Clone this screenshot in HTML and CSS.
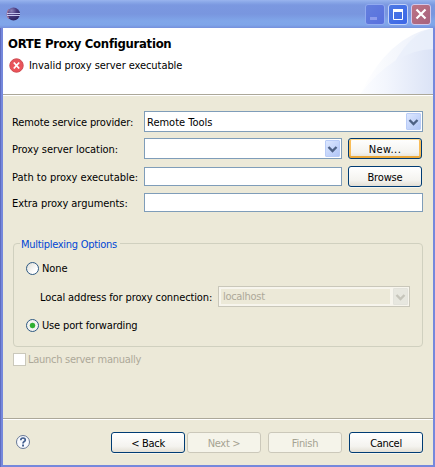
FILE: index.html
```html
<!DOCTYPE html>
<html lang="en">
<head>
<meta charset="utf-8">
<title>ORTE Proxy Configuration</title>
<link rel="stylesheet" href="styles.css">
</head>
<body>
<main class="window">
  <header class="titlebar">
    <svg class="app-icon" width="15" height="14" viewBox="0 0 15 14">
      <defs><radialGradient id="orb" cx=".35" cy=".25" r=".75"><stop offset="0" stop-color="#8d83b8"/><stop offset=".5" stop-color="#4a3b80"/><stop offset="1" stop-color="#2c2360"/></radialGradient></defs>
      <circle cx="7.5" cy="7" r="6.5" fill="url(#orb)"/>
      <path d="M3 2.5A6.3 6.3 0 0 0 3 11.5" fill="none" stroke="#9c7294" stroke-width="1.2"/>
      <path d="M1 6.5h13M1 8.5h13" stroke="#c5c5ee"/>
    </svg>
    <div class="controls">
      <span class="ctl min"><svg width="20" height="20"><path d="M5 13h7v3H5z" fill="#8c9cec"/></svg></span>
      <span class="ctl max"><svg width="20" height="20"><path d="M5.500 6v9.500h9V6" fill="none" stroke="#fff"/><path d="M5 5h10v3H5z" fill="#fff"/></svg></span>
      <span class="ctl close"><svg width="20" height="20"><path d="M5.500 5.500l9 9M14.500 5.500l-9 9" stroke="#fff" stroke-width="2.200"/></svg></span>
    </div>
  </header>
  <section class="banner">
    <svg class="swoosh" width="76" height="66" viewBox="0 0 76 66">
      <defs>
        <linearGradient id="fade1" x2="1"><stop offset="0" stop-color="#fff"/><stop offset="1" stop-color="#eaeffa"/></linearGradient>
        <linearGradient id="fade2" x2="1"><stop offset="0" stop-color="#fcfdff"/><stop offset=".35" stop-color="#f3f6fd"/><stop offset="1" stop-color="#dbe3f6"/></linearGradient>
      </defs>
      <path d="M3 66Q32 8 76 0V66Z" fill="url(#fade1)"/>
      <path d="M24 66Q44 7 76 0V66Z" fill="#e6edfa" opacity=".6"/>
      <path d="M3 66Q37 22 76 21V66Z" fill="url(#fade2)"/>
    </svg>
    <h1>ORTE Proxy Configuration</h1>
    <p class="message">
      <svg width="15" height="15" viewBox="0 0 15 15"><defs><linearGradient id="red" x2="0" y2="1"><stop offset="0" stop-color="#e5555c"/><stop offset="1" stop-color="#ee5358"/></linearGradient></defs><circle cx="7.500" cy="7.500" r="6.700" fill="url(#red)" stroke="#cf4a50"/><path d="M4.800 4.500l5.400 6M10.200 4.500l-5.400 6" stroke="#fff" stroke-width="1.800"/></svg>
      <span class="t-msg">Invalid proxy server executable</span>
    </p>
  </section>
  <section class="content">
    <div class="row r1"><label class="t-remote">Remote service provider:</label><div class="combo wide"><span class="t-tools">Remote Tools</span><i class="arrow"><svg width="15" height="17"><path d="M3.500 7L7.500 11L11.500 7" fill="none" stroke="#4d6185" stroke-width="2.400"/></svg></i></div></div>
    <div class="row r2"><label class="t-loc">Proxy server location:</label><div class="combo"><i class="arrow"><svg width="15" height="17"><path d="M3.500 7L7.500 11L11.500 7" fill="none" stroke="#4d6185" stroke-width="2.400"/></svg></i></div><button class="hot"><span class="t-new">New...</span></button></div>
    <div class="row r3"><label class="t-path">Path to proxy executable:</label><div class="field"></div><button><span class="t-browse">Browse</span></button></div>
    <div class="row r4"><label class="t-extra">Extra proxy arguments:</label><div class="field wide"></div></div>
    <div class="group">
      <div class="legend"><span class="t-multi">Multiplexing Options</span></div>
      <div class="option none"><i class="radio"></i><span class="t-none">None</span></div>
      <div class="address"><span class="t-local">Local address for proxy connection:</span><div class="combo disabled"><div class="value"><span class="t-host">localhost</span></div><i class="arrow"><svg width="15" height="17"><path d="M3.500 7L7.500 11L11.500 7" fill="none" stroke="#c6c5bb" stroke-width="2.400"/></svg></i></div></div>
      <div class="option port"><i class="radio checked"></i><span class="t-use">Use port forwarding</span></div>
    </div>
    <div class="launch"><i class="check"></i><span class="t-launch">Launch server manually</span></div>
  </section>
  <footer class="actions">
    <svg class="help" width="16" height="16" viewBox="0 0 16 16"><circle cx="8" cy="8" r="6.500" fill="#f8faff" stroke="#697997"/><path d="M5.800 6.200C5.800 3.300 10.300 3.400 10.300 5.900C10.300 7.600 8 7.400 8 9.400" fill="none" stroke="#415d8d" stroke-width="1.700"/><path d="M7.100 10.500h1.900v1.900H7.100z" fill="#415d8d"/></svg>
    <button><span class="t-back">&lt; Back</span></button>
    <button class="off"><span class="t-next">Next &gt;</span></button>
    <button class="off finish"><span class="t-finish">Finish</span></button>
    <button class="cancel"><span class="t-cancel">Cancel</span></button>
  </footer>
</main>
</body>
</html>
```
FILE: styles.css
```css
* { box-sizing: border-box; }
body { margin: 0; width: 435px; height: 467px; overflow: hidden; background: #7588dc; font: 11px/14px "DejaVu Sans Condensed", "DejaVu Sans", sans-serif; font-stretch: condensed; color: #000; }
svg { display: block; }
span { white-space: nowrap; }
.window { height: 467px; display: flex; flex-direction: column; padding: 0 2px 2px 3px; border-top-left-radius: 3px; background: linear-gradient(90deg, #5f6cc0 0 1px, #7588dc 1px); }
.titlebar { height: 28px; flex: none; margin: 0 -2px 0 -3px; padding: 4px 4px 0 6px; display: flex; justify-content: space-between; background: linear-gradient(#99b4ee 0, #8aa8e8 2px, #7b98e0 5px, #7996df 14px, #80a6e9 21px, #7fa5e9 25px, #7590dc 28px); }
.app-icon { margin-top: 3px; }
.controls { display: flex; gap: 3px; }
.ctl { width: 20px; height: 21px; border: 1px solid #c3d2f8; border-radius: 3px; overflow: hidden; }
.ctl svg { margin: -1px; }
.min { border-color: #91aaf0; background: linear-gradient(135deg, #637fde, #5870de); }
.max { background: linear-gradient(135deg, #4c79e4, #3c66e7); }
.close { background: linear-gradient(135deg, #bd7384, #a6627e); border-color: #d1c7ea; }
.banner { position: relative; height: 67px; flex: none; background: #fff; border-bottom: 1px solid #aca899; padding: 9px 0 0 5px; }
.swoosh { position: absolute; right: 0; top: 0; }
h1 { margin: 0; font-size: 13px; line-height: 14px; font-weight: bold; white-space: nowrap; letter-spacing: -.29px; }
.message { margin: 7px 0 0 1px; display: flex; gap: 5px; align-items: center; }
.content { height: 323px; flex: none; background: #ece9d8; border-top: 1px solid #fff; padding: 15px 10px 0; }
.row { display: grid; grid-template-columns: 132px 198px 74px; align-items: center; margin-left: -1px; }
.row button { margin-left: 6px; }
.row label { white-space: nowrap; }
.content label, .content span, .actions span { transform: translateY(1px); }
.t-msg { letter-spacing: -.07px; }
.t-remote { letter-spacing: -.13px; }
.t-loc, .t-extra { letter-spacing: -.05px; }
.t-multi { letter-spacing: -.29px; }
.t-none { letter-spacing: -.1px; }
.t-local { letter-spacing: -.11px; }
.t-host { letter-spacing: -.3px; }
.t-use { letter-spacing: -.15px; }
.t-launch { letter-spacing: -.28px; }
.t-new { letter-spacing: .4px; }
.t-browse { letter-spacing: -.15px; }
.t-back, .t-cancel, .t-next, .t-finish { letter-spacing: -.3px; }
.r1 { height: 21px; }
.r2 { height: 21px; margin-top: 6px; }
.r3 { height: 21px; margin-top: 7px; }
.r4 { height: 19px; margin-top: 6px; }
.combo, .field { border: 1px solid #7f9db9; background: #fff; }
.combo { height: 21px; display: flex; align-items: center; padding: 1px; }
.combo > span { margin-left: 1px; }
.field { height: 19px; }
.wide { width: 279px; }
.arrow { width: 15px; height: 17px; margin-left: auto; border-radius: 1px; border: 1px solid #b9ccf7; background: linear-gradient(135deg, #dce7ff, #b1c6f7); }
.arrow svg { margin: -1px; }
button { width: 74px; height: 21px; padding: 0; border: 1px solid #003c74; border-radius: 3px; background: linear-gradient(#fff, #f4f3ef 70%, #e3dfd5); font: inherit; color: #000; display: flex; align-items: center; justify-content: center; box-shadow: 0 1px 0 #f7f5ec; }
.hot { box-shadow: inset 0 1px #ffdc92, inset 0 -2px #eba83a, inset 2px 0 #f9bd58, inset -2px 0 #f9bd58; }
.off { color: #a5a392; background: #f5f4ea; border-color: #cbc8ba; box-shadow: none; }
.group { height: 104px; margin-top: 31px; border: 1px solid #d0d0bf; border-radius: 4px; padding-left: 12px; }
.legend { height: 14px; margin: -7px 0 0 -6px; display: flex; }
.legend span { background: #ece9d8; padding: 0 3px 0 1px; color: #0046d5; }
.option { display: flex; align-items: center; gap: 3px; height: 14px; }
.none { margin-top: 10px; }
.radio { width: 13px; height: 13px; border: 1px solid #2d5983; border-radius: 50%; background: linear-gradient(135deg, #deddd5, #fff 70%); }
.checked { background: radial-gradient(circle, #2fae31 0 2px, #46bd47 2.500px, #f3f3ef 3.200px); }
.address { height: 21px; margin-top: 11px; padding-left: 14px; display: flex; align-items: center; }
.disabled { width: 192px; margin-left: auto; margin-right: 12px; border-color: #c9c7ba; background: #f7f5ed; color: #aca899; }
.value { width: 169px; height: 15px; margin-left: 1px; padding-left: 2px; background: #ece9d8; line-height: 14px; }
.value span { display: block; }
.disabled .arrow { border-color: #e3e3dc; background: #e7e7df; }
.port { margin-top: 11px; }
.launch { height: 14px; margin-top: 5px; display: flex; align-items: center; gap: 2px; color: #aca899; }
.check { width: 13px; height: 13px; background: #fff; border: 1px solid #cac8bb; }
.actions { flex: 1; background: #ece9d8; border-top: 1px solid #aca899; box-shadow: inset 0 1px #fff; padding: 13px 10px 0 12px; display: flex; }
.help { margin: 2px 80px 0 0; }
.actions button { margin-right: 2px; }
.actions .finish { margin-left: 5px; margin-right: 7px; }
.actions .cancel { margin-right: 0; }
```
